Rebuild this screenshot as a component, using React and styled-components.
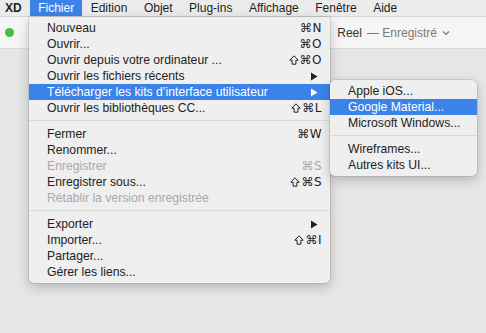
import React from "react";
import styled, { createGlobalStyle } from "styled-components";

const Global = createGlobalStyle`
  html, body { margin: 0; padding: 0; }
  body {
    width: 486px;
    height: 333px;
    overflow: hidden;
    font-family: "Liberation Sans", "DejaVu Sans", sans-serif;
    -webkit-font-smoothing: antialiased;
  }
`;

const Screen = styled.div`
  position: relative;
  width: 486px;
  height: 333px;
  display: flex;
  flex-direction: column;
  background: #e6e6e6;
`;

const MenuBar = styled.div`
  height: 16px;
  display: flex;
  align-items: stretch;
  padding-left: 5px;
  background: #ebebeb;
  border-bottom: 1px solid #d6d6d6;
  font-size: 12px;
  color: #1e1e1e;
`;

const AppName = styled.span`
  font-weight: bold;
  display: flex;
  align-items: center;
  margin-right: 8px;
`;

const BarItem = styled.span`
  display: flex;
  align-items: center;
  padding: 0 8px 0 8.5px;
  background: ${(p) => (p.active ? "#3b83e9" : "transparent")};
  color: ${(p) => (p.active ? "#fff" : "inherit")};
`;

const Toolbar = styled.div`
  height: 31px;
  display: flex;
  align-items: center;
  padding-left: 5px;
  background: #f5f5f5;
  border-bottom: 1px solid #dadada;
`;

const Light = styled.span`
  width: 9px;
  height: 9px;
  border-radius: 50%;
  background: #3fc23f;
`;

const DocTitle = styled.div`
  margin-left: auto;
  margin-right: 36px;
  display: flex;
  align-items: center;
  gap: 5px;
  font-size: 12px;
  color: #333;
`;

const Saved = styled.span`
  color: #7a7a7a;
`;

const Content = styled.div`
  flex: 1;
`;

const Menu = styled.div`
  position: absolute;
  left: ${(p) => p.left}px;
  top: ${(p) => p.top}px;
  width: ${(p) => p.width}px;
  padding: 3px 0;
  background: #efefef;
  border-radius: ${(p) => (p.sub ? "5px" : "0 0 5px 5px")};
  box-shadow: 0 0 0 0.5px rgba(0, 0, 0, 0.18), 0 4px 12px rgba(0, 0, 0, 0.22);
  font-size: 12.2px;
  color: #222;
`;

const Row = styled.div`
  height: 16px;
  display: flex;
  align-items: center;
  padding: 0 ${(p) => (p.sub ? 10 : 8)}px 0 ${(p) => (p.sub ? 18 : 18)}px;
  background: ${(p) => (p.active ? "#3b83e9" : "transparent")};
  color: ${(p) => (p.active ? "#fff" : p.disabled ? "#a9a9a9" : "#222")};
  white-space: nowrap;
`;

const Label = styled.span`
  flex: 1;
`;

const Key = styled.span`
  display: flex;
  align-items: center;
  gap: 1px;
  font-family: "DejaVu Sans", "Liberation Sans", sans-serif;
  font-size: 12px;
  letter-spacing: 0.5px;
`;

const Sep = styled.div`
  height: 1px;
  background: #dadada;
  margin: 4px 0 5px;
`;

const Arrow = ({ color }) => (
  <svg width="8" height="9" viewBox="0 0 8 9" style={{ marginRight: 4 }}>
    <path d="M1 0.5 L7.5 4.5 L1 8.5 Z" fill={color} />
  </svg>
);

const Shift = () => (
  <svg width="10" height="10" viewBox="0 0 10 10">
    <path
      d="M5 0.8 L9.2 5.2 L6.9 5.2 L6.9 9.2 L3.1 9.2 L3.1 5.2 L0.8 5.2 Z"
      fill="none"
      stroke="currentColor"
      strokeWidth="1"
      strokeLinejoin="round"
    />
  </svg>
);

const Chevron = () => (
  <svg width="8" height="6" viewBox="0 0 8 6">
    <path d="M1 1.5 L4 4.5 L7 1.5" fill="none" stroke="#777" strokeWidth="1.2" />
  </svg>
);

const fileMenu = [
  [
    { label: "Nouveau", key: "⌘N" },
    { label: "Ouvrir...", key: "⌘O" },
    { label: "Ouvrir depuis votre ordinateur ...", key: "⌘O", shift: true },
    { label: "Ouvrir les fichiers récents", arrow: true },
    { label: "Télécharger les kits d’interface utilisateur", arrow: true, active: true },
    { label: "Ouvrir les bibliothèques CC...", key: "⌘L", shift: true },
  ],
  [
    { label: "Fermer", key: "⌘W" },
    { label: "Renommer..." },
    { label: "Enregistrer", key: "⌘S", disabled: true },
    { label: "Enregistrer sous...", key: "⌘S", shift: true },
    { label: "Rétablir la version enregistrée", disabled: true },
  ],
  [
    { label: "Exporter", arrow: true },
    { label: "Importer...", key: "⌘I", shift: true },
    { label: "Partager..." },
    { label: "Gérer les liens..." },
  ],
];

const kitsMenu = [
  [
    { label: "Apple iOS..." },
    { label: "Google Material...", active: true },
    { label: "Microsoft Windows..." },
  ],
  [{ label: "Wireframes..." }, { label: "Autres kits UI..." }],
];

const MenuList = ({ groups, sub }) =>
  groups.map((group, i) => (
    <React.Fragment key={i}>
      {i > 0 && <Sep />}
      {group.map((item) => (
        <Row key={item.label} active={item.active} disabled={item.disabled} sub={sub}>
          <Label>{item.label}</Label>
          {item.key && (
            <Key>
              {item.shift && <Shift />}
              <span>{item.key}</span>
            </Key>
          )}
          {item.arrow && <Arrow color={item.active ? "#fff" : "#222"} />}
        </Row>
      ))}
    </React.Fragment>
  ));

export default function App() {
  return (
    <>
      <Global />
      <Screen>
        <MenuBar>
          <AppName>XD</AppName>
          <BarItem active>Fichier</BarItem>
          <BarItem>Edition</BarItem>
          <BarItem>Objet</BarItem>
          <BarItem>Plug-ins</BarItem>
          <BarItem>Affichage</BarItem>
          <BarItem>Fenêtre</BarItem>
          <BarItem>Aide</BarItem>
        </MenuBar>
        <Toolbar>
          <Light />
          <DocTitle>
            <span>Reel</span>
            <Saved>— Enregistré</Saved>
            <Chevron />
          </DocTitle>
        </Toolbar>
        <Content />
        <Menu left={29} top={17} width={301}>
          <MenuList groups={fileMenu} />
        </Menu>
        <Menu left={330} top={80} width={147} sub>
          <MenuList groups={kitsMenu} sub />
        </Menu>
      </Screen>
    </>
  );
}
